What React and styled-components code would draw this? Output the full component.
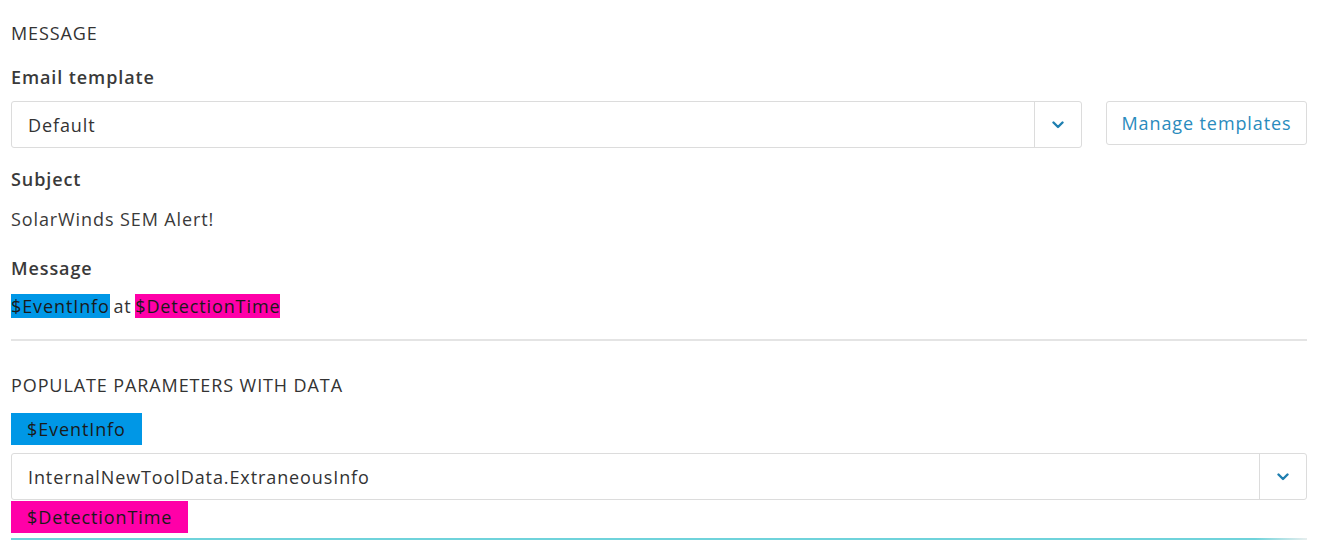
import React from 'react';
import styled, { createGlobalStyle } from 'styled-components';

const GlobalStyle = createGlobalStyle`
  body {
    margin: 0;
    background: #fff;
    font-family: "Open Sans", "Noto Sans", sans-serif;
    color: #333;
  }
`;

const Page = styled.div`
  padding: 20px 21px 0 11px;
  height: 540px;
  box-sizing: border-box;
  overflow: hidden;
  font-size: 18px;
  letter-spacing: 0.9px;
  line-height: 26px;
`;

const SectionTitle = styled.div`
  text-transform: uppercase;
  color: #333;
  margin-bottom: ${(p) => p.$mb || 0}px;
`;

const Label = styled.div`
  font-weight: 600;
  color: #3a3a3a;
  margin-bottom: ${(p) => p.$mb || 0}px;
`;

const Value = styled.div`
  color: #3a3a3a;
  margin-bottom: ${(p) => p.$mb || 0}px;
`;

const Row = styled.div`
  display: flex;
  align-items: flex-start;
  gap: 24px;
  margin: ${(p) => p.$mt || 0}px 0 ${(p) => p.$mb || 0}px;
`;

const Select = styled.div`
  flex: 1;
  display: flex;
  height: 47px;
  box-sizing: border-box;
  border: 1px solid #dcdcdc;
  border-radius: 3px;
  background: #fff;
`;

const SelectValue = styled.div`
  flex: 1;
  display: flex;
  align-items: center;
  padding-left: 16px;
  color: #333;
`;

const SelectToggle = styled.div`
  width: 46px;
  display: flex;
  align-items: center;
  justify-content: center;
  border-left: 1px solid #dcdcdc;
`;

const Button = styled.button`
  height: 44px;
  width: 201px;
  padding: 0;
  border: 1px solid #dcdcdc;
  border-radius: 3px;
  background: #fff;
  color: #2a8bbd;
  font-family: inherit;
  font-size: 18px;
  letter-spacing: 0.9px;
  cursor: pointer;
`;

const Tag = styled.span`
  display: inline-block;
  background: ${(p) => (p.$tone === 'pink' ? '#ff00a8' : '#0097e6')};
  color: #1a1a1a;
  line-height: 24px;
  padding: ${(p) => (p.$big ? '4px 16px' : '0')};
`;

const TagLine = styled.div`
  color: #333;
  word-spacing: -2px;
  margin-bottom: 20px;
`;

const Divider = styled.hr`
  border: 0;
  border-top: 2px solid #e4e4e4;
  margin: 0 0 31px;
`;

const ParamBlock = styled.div`
  display: flex;
  flex-direction: column;
  align-items: flex-start;
  margin-top: ${(p) => p.$mt || 0}px;
`;

const Focused = styled.div`
  margin-top: 5px;
  height: 3px;
  background: linear-gradient(to right, #6fd3db 0%, #6fd3db 96%, #e8eeee 100%);
`;

const Chevron = () => (
  <svg width="12" height="8" viewBox="0 0 12 8">
    <path d="M1.5 1.5 L6 6 L10.5 1.5" fill="none" stroke="#1f7fb0" strokeWidth="2.4" strokeLinecap="round" strokeLinejoin="round" />
  </svg>
);

export default function App() {
  return (
    <>
      <GlobalStyle />
      <Page>
        <SectionTitle $mb={18}>Message</SectionTitle>
        <Label $mb={11}>Email template</Label>
        <Row $mb={18}>
          <Select>
            <SelectValue>Default</SelectValue>
            <SelectToggle><Chevron /></SelectToggle>
          </Select>
          <Button>Manage templates</Button>
        </Row>
        <Label $mb={14}>Subject</Label>
        <Value $mb={23}>SolarWinds SEM Alert!</Value>
        <Label $mb={12}>Message</Label>
        <TagLine>
          <Tag>$EventInfo</Tag> at <Tag $tone="pink">$DetectionTime</Tag>
        </TagLine>
        <Divider />
        <SectionTitle $mb={15}>Populate parameters with data</SectionTitle>
        <ParamBlock>
          <Tag $big>$EventInfo</Tag>
        </ParamBlock>
        <Row $mt={8}>
          <Select>
            <SelectValue>InternalNewToolData.ExtraneousInfo</SelectValue>
            <SelectToggle><Chevron /></SelectToggle>
          </Select>
        </Row>
        <ParamBlock $mt={1}>
          <Tag $big $tone="pink">$DetectionTime</Tag>
        </ParamBlock>
        <Focused />
      </Page>
    </>
  );
}
